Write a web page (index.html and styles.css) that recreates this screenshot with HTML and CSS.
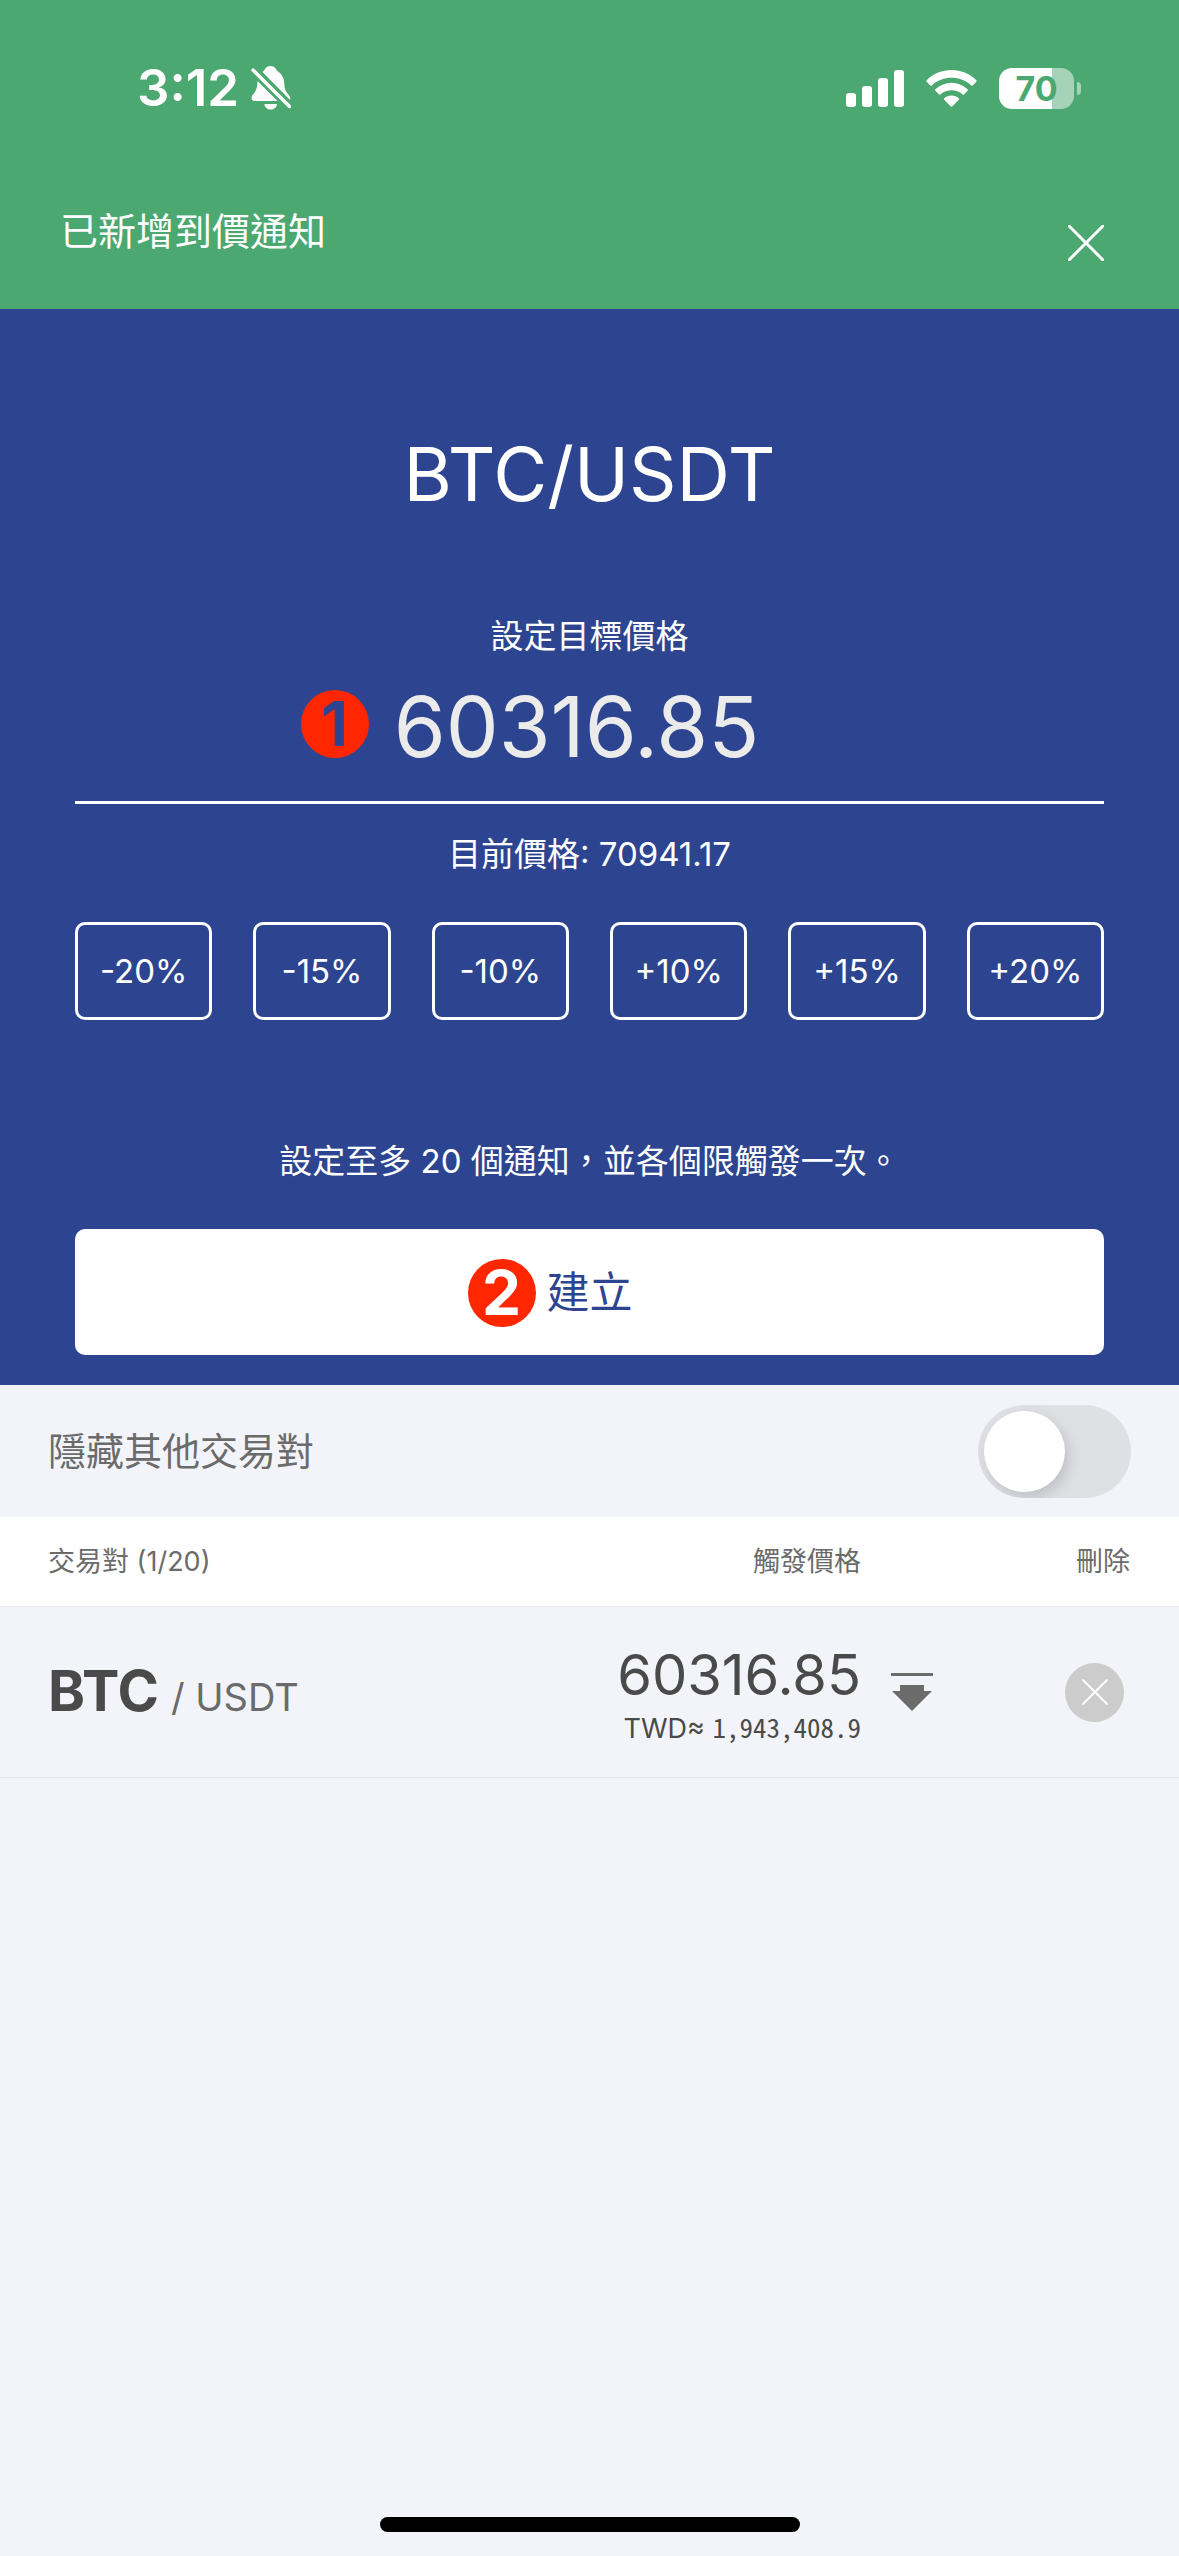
FILE: index.html
```html
<!DOCTYPE html>
<html lang="zh-Hant">
<head>
<meta charset="utf-8">
<meta name="viewport" content="width=device-width, initial-scale=1">
<title>到價通知</title>
<link rel="stylesheet" href="styles.css">
</head>
<body>
<div class="screen">
  <header class="top">
    <div class="status">
      <div class="status-group">
        <span class="clock">3:12</span>
        <svg class="bell" viewBox="0 0 40 44" aria-hidden="true">
          <path d="M6.500 15 C6.400 23 4.500 25.500 2 28.500 C-.5 31.500 .3 35 3.500 35 H26.500 Z M11.500 6 C12.800 5 13.300 4.500 14 3 C15 1 17.300 0 19.500 0 C22 0 24 1.200 25 3.200 C25.700 4.500 26.500 5 28 6.200 C31.500 9 33 12.500 33.300 17.500 C33.600 23.500 34.800 25.500 37 28 C39 30.300 39.500 31.500 39 34 Z M13.300 38 H26 C25.600 41.500 23 43.600 19.600 43.600 C16.300 43.600 13.700 41.500 13.300 38 Z" fill="currentColor"/>
          <path d="M2 4 L38.500 40.500" stroke="currentColor" stroke-width="3.400" stroke-linecap="round"/>
        </svg>
      </div>
      <div class="status-group">
        <svg class="signal" viewBox="0 0 58 37" aria-hidden="true" fill="currentColor">
          <rect x="0" y="23" width="10" height="14" rx="3"/><rect x="16" y="16" width="10" height="21" rx="3"/><rect x="32" y="8" width="10" height="29" rx="3"/><rect x="48" y="0" width="10" height="37" rx="3"/>
        </svg>
        <svg class="wifi" viewBox="0 0 51 37" aria-hidden="true" fill="currentColor">
          <path d="M.7 10.200 C14-3.400 37-3.400 50.300 10.200 Q51 11 50.300 11.700 L46.700 15.400 Q46 16 45.300 15.400 C34 5.300 17 5.300 5.700 15.400 Q5 16 4.300 15.400 L.7 11.700 Q0 11 .7 10.200 Z"/>
          <path d="M9.400 19.300 C18.500 10.600 32.500 10.600 41.600 19.300 Q42.300 20 41.600 20.700 L37.900 24.400 Q37.300 25 36.600 24.400 C30.300 19 20.700 19 14.400 24.400 Q13.700 25 13.100 24.400 L9.400 20.700 Q8.700 20 9.400 19.300 Z"/>
          <path d="M18.200 28.300 C22.500 24.600 28.500 24.600 32.800 28.300 Q33.500 29 32.800 29.700 L26.200 36.400 Q25.500 37 24.800 36.400 L18.200 29.700 Q17.500 29 18.200 28.300 Z"/>
        </svg>
        <div class="battery"><span class="battery-body">70</span><span class="battery-tip"></span></div>
      </div>
    </div>
    <div class="toast" role="status">
      <p class="toast-text">已新增到價通知</p>
      <button class="toast-close" type="button" aria-label="關閉">
        <svg viewBox="0 0 36 36" aria-hidden="true"><path d="M1 1 L35 35 M35 1 L1 35" stroke="currentColor" stroke-width="3" stroke-linecap="round"/></svg>
      </button>
    </div>
  </header>

  <main>
    <form class="panel">
      <h1 class="pair-title">BTC/USDT</h1>
      <label class="target-label" for="target">設定目標價格</label>
      <div class="target">
        <input class="target-input" id="target" type="text" inputmode="decimal" value="60316.85">
        <span class="badge badge-target">1</span>
      </div>
      <p class="current">目前價格: 70941.17</p>
      <div class="steps">
        <button class="step" type="button">-20%</button>
        <button class="step" type="button">-15%</button>
        <button class="step" type="button">-10%</button>
        <button class="step" type="button">+10%</button>
        <button class="step" type="button">+15%</button>
        <button class="step" type="button">+20%</button>
      </div>
      <p class="notice">設定至多 20 個通知，並各個限觸發一次。</p>
      <div class="create">
        <button class="create-button" type="button">建立</button>
        <span class="badge badge-create">2</span>
      </div>
    </form>

    <div class="filter">
      <label class="filter-label" for="hide-others">隱藏其他交易對</label>
      <input class="switch" id="hide-others" type="checkbox" role="switch">
    </div>

    <table class="alerts">
      <thead>
        <tr>
          <th class="col-pair" scope="col">交易對 (1/20)</th>
          <th class="col-price" scope="col">觸發價格</th>
          <td class="col-trend"></td>
          <th class="col-delete" scope="col">刪除</th>
        </tr>
      </thead>
      <tbody>
        <tr>
          <td class="col-pair"><div class="pair"><span class="base">BTC</span><span class="quote">/ USDT</span></div></td>
          <td class="col-price">
            <div class="price">60316.85</div>
            <div class="fiat">TWD≈ <span class="fiat-value">1,943,408.9</span></div>
          </td>
          <td class="col-trend">
            <svg class="trend" viewBox="0 0 42 38" aria-hidden="true" fill="currentColor"><path d="M0 0 H42 V3 H0 Z M9 12 H33 V18 H41 L21 38 L1 18 H9 Z"/></svg>
          </td>
          <td class="col-delete">
            <button class="delete" type="button" aria-label="刪除 BTC/USDT 通知">
              <svg viewBox="0 0 28 28" aria-hidden="true"><path d="M2 2 L26 26 M26 2 L2 26" stroke="currentColor" stroke-width="2" stroke-linecap="round"/></svg>
            </button>
          </td>
        </tr>
      </tbody>
    </table>
  </main>

  <div class="home-bar"></div>
</div>
</body>
</html>
```
FILE: styles.css
```css
:root {
  --green: #4ba870;
  --blue: #2d4590;
  --page: #f3f4f9;
  --line: #e6e7eb;
  --ink: #4a4a4a;
  --muted: #6b6b6b;
  --red: #ff2600;
}

* {
  box-sizing: border-box;
}

body {
  margin: 0;
  background: var(--page);
  color: var(--muted);
  font-family: Inter, "Noto Sans CJK TC", sans-serif;
  font-size: 33px;
  line-height: 48px;
}

h1,
p {
  margin: 0;
  font-weight: 400;
}

button,
input {
  margin: 0;
  font: inherit;
}

svg {
  display: block;
  fill: none;
}

.screen {
  display: flex;
  flex-direction: column;
  min-height: 100vh;
}

/* status bar and toast */

.top {
  background: var(--green);
  color: #fff;
}

.status {
  display: flex;
  align-items: center;
  justify-content: space-between;
  height: 176px;
  padding: 0 98px 0 137px;
}

.status-group {
  display: flex;
  align-items: center;
}

.clock {
  font-size: 51px;
  font-weight: 600;
}

.bell {
  width: 40px;
  height: 44px;
  margin-left: 12px;
  fill: none;
}

.signal {
  width: 58px;
  height: 37px;
  fill: currentColor;
}

.wifi {
  width: 51px;
  height: 37px;
  margin: 0 22px;
  fill: currentColor;
}

.battery {
  display: flex;
  align-items: center;
  gap: 3px;
}

.battery-body {
  width: 75px;
  height: 41px;
  border-radius: 13px;
  background: linear-gradient(to right, #fff 71%, #a5d3b8 71%);
  color: var(--green);
  font-size: 34px;
  font-weight: 700;
  line-height: 41px;
  text-align: center;
}

.battery-tip {
  width: 4px;
  height: 13px;
  border-radius: 0 4px 4px 0;
  background: #a5d3b8;
}

.toast {
  display: flex;
  align-items: center;
  justify-content: space-between;
  height: 133px;
  padding: 0 75px 0 60px;
}

.toast-text {
  padding-bottom: 23px;
  font-size: 38px;
}

.toast-close {
  width: 36px;
  height: 36px;
  padding: 0;
  border: 0;
  background: none;
  color: #fff;
}

/* alert form */

.panel {
  display: flex;
  flex-direction: column;
  padding: 117px 75px 30px;
  background: var(--blue);
  color: #fff;
  text-align: center;
}

.pair-title {
  font-size: 74px;
  line-height: 96px;
}

.target-label {
  margin-top: 90px;
}

.target,
.create {
  position: relative;
}

.target-input {
  display: block;
  width: 100%;
  height: 144px;
  padding: 0 26px 9px 0;
  border: 0;
  border-bottom: 3px solid #fff;
  border-radius: 0;
  background: none;
  color: #ebebeb;
  font-size: 84px;
  text-align: center;
}

.badge {
  position: absolute;
  top: 30px;
  width: 68px;
  height: 68px;
  border-radius: 50%;
  background: var(--red);
  font-size: 62px;
  font-weight: 700;
  line-height: 68px;
  text-align: center;
}

.badge-target {
  left: calc(50% - 289px);
  color: var(--blue);
}

.badge-create {
  left: calc(50% - 122px);
  color: #fff;
}

.current {
  margin-top: 26px;
}

.steps {
  display: grid;
  grid-template-columns: repeat(6, 1fr);
  gap: 41px;
  margin-top: 44px;
}

.step {
  height: 98px;
  padding: 0;
  border: 3px solid #fff;
  border-radius: 10px;
  background: none;
  color: #fff;
}

.notice {
  margin-top: 117px;
}

.create {
  margin-top: 44px;
}

.create-button {
  display: block;
  width: 100%;
  height: 126px;
  border: 0;
  border-radius: 10px;
  background: #fff;
  color: var(--blue);
  font-size: 43px;
}

/* list filter */

.filter {
  display: flex;
  align-items: center;
  justify-content: space-between;
  height: 132px;
  padding: 0 48px;
}

.filter-label {
  font-size: 38px;
}

.switch {
  width: 153px;
  height: 93px;
  padding: 6px;
  border-radius: 47px;
  background: #dfe0e4;
  appearance: none;
  overflow: hidden;
}

.switch::before {
  content: "";
  display: block;
  width: 81px;
  height: 81px;
  border-radius: 50%;
  background: #fff;
  box-shadow: 4px 6px 14px rgba(0, 0, 0, 0.14);
}

.switch:checked::before {
  margin-left: auto;
}

/* alerts table */

.alerts {
  width: 100%;
  border-collapse: separate;
  border-spacing: 0;
}

.alerts th,
.alerts td {
  padding: 0;
  border-bottom: 1px solid var(--line);
}

.alerts thead {
  background: #fff;
  font-size: 27px;
}

.alerts thead tr {
  height: 90px;
}

.alerts tbody tr {
  height: 171px;
}

.alerts th {
  font-weight: 400;
  text-align: left;
}

.alerts .col-pair {
  padding-left: 48px;
}

.alerts .col-price {
  width: 280px;
  text-align: right;
}

.alerts .col-trend {
  width: 92px;
  padding-left: 30px;
}

.alerts .col-delete {
  width: 226px;
  padding-right: 49px;
  text-align: right;
}

.pair {
  display: flex;
  align-items: baseline;
  gap: 12px;
  padding-top: 4px;
  line-height: 72px;
}

.base {
  color: var(--ink);
  font-size: 56px;
  font-weight: 700;
}

.quote {
  font-size: 38px;
}

.price {
  color: var(--ink);
  font-size: 56px;
  line-height: 72px;
}

.fiat {
  color: var(--ink);
  font-size: 27px;
  line-height: 32px;
}

.fiat-value {
  font-family: "Noto Sans CJK TC", sans-serif;
  font-feature-settings: "hwid" 1;
}

.trend {
  width: 42px;
  height: 38px;
  fill: currentColor;
}

.delete {
  display: inline-flex;
  align-items: center;
  justify-content: center;
  width: 59px;
  height: 59px;
  margin-right: 6px;
  padding: 0;
  border: 0;
  border-radius: 50%;
  background: #ccc;
  color: #fff;
  vertical-align: middle;
}

.delete svg {
  width: 28px;
  height: 28px;
}

.home-bar {
  width: 420px;
  height: 15px;
  margin: auto auto 24px;
  border-radius: 8px;
  background: #000;
}
```
